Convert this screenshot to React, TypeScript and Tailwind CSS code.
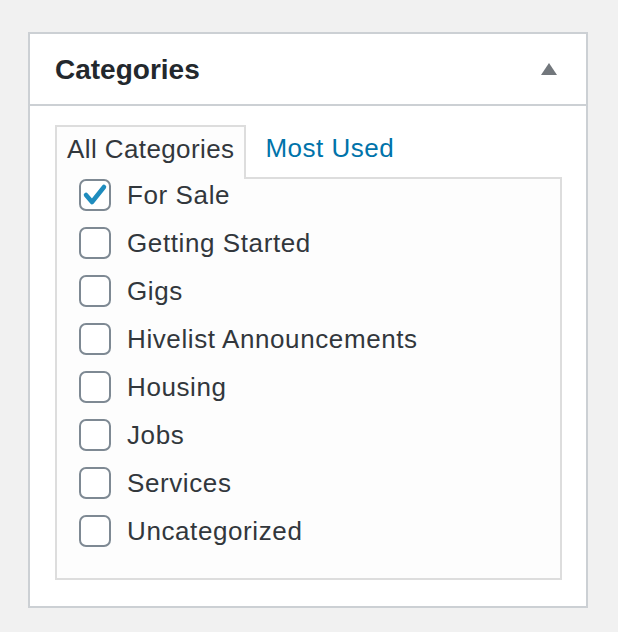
const categories = [
  { name: 'For Sale', checked: true },
  { name: 'Getting Started', checked: false },
  { name: 'Gigs', checked: false },
  { name: 'Hivelist Announcements', checked: false },
  { name: 'Housing', checked: false },
  { name: 'Jobs', checked: false },
  { name: 'Services', checked: false },
  { name: 'Uncategorized', checked: false },
];

function Checkbox({ checked }: { checked: boolean }) {
  return (
    <span className="relative flex h-[32px] w-[32px] shrink-0 items-center justify-center rounded-[7px] border-2 border-[#7e8993] bg-white">
      {checked && (
        <svg width="26" height="26" viewBox="0 0 26 26" className="absolute">
          <polyline
            points="4,13 10,20 22,5"
            fill="none"
            stroke="#1e8cbe"
            strokeWidth="4.5"
            strokeLinecap="round"
            strokeLinejoin="round"
          />
        </svg>
      )}
    </span>
  );
}

export default function App() {
  return (
    <div className="min-h-[632px] bg-[#f1f1f1] pl-[28px] pt-[32px] font-['Liberation_Sans',Arial,sans-serif]">
      <div className="w-[560px] border-2 border-[#ccd0d4] bg-white">
        {/* header */}
        <div className="flex h-[72px] items-center justify-between border-b-2 border-[#ccd0d4] pl-[25px] pr-[29px]">
          <h2 className="pt-[2px] text-[28px] font-bold text-[#23282d]">Categories</h2>
          <svg width="16" height="12" viewBox="0 0 16 12">
            <polygon points="8,0 16,12 0,12" fill="#72777c" />
          </svg>
        </div>

        {/* body */}
        <div className="px-[25px] pb-[26px] pt-[19px]">
          <div className="flex items-end">
            <div className="relative z-10 -mb-[2px] h-[54px] border-2 border-b-0 border-[#dddddd] bg-[#fdfdfd] px-[10px] pt-[3px] text-[26px] tracking-[0.4px] text-[#32373c]">
              All Categories
            </div>
            <div className="h-[52px] pl-[19px] pt-[4px] text-[26px] tracking-[0.5px] text-[#0073aa]">
              Most Used
            </div>
          </div>
          <div className="flex w-[507px] flex-col gap-[16px] border-2 border-[#dddddd] bg-[#fdfdfd] pb-[31px] pl-[22px]">
            {categories.map((c) => (
              <label key={c.name} className="flex h-[32px] items-center gap-[16px]">
                <Checkbox checked={c.checked} />
                <span className="text-[26px] tracking-[0.6px] text-[#32373c]">{c.name}</span>
              </label>
            ))}
          </div>
        </div>
      </div>
    </div>
  );
}
